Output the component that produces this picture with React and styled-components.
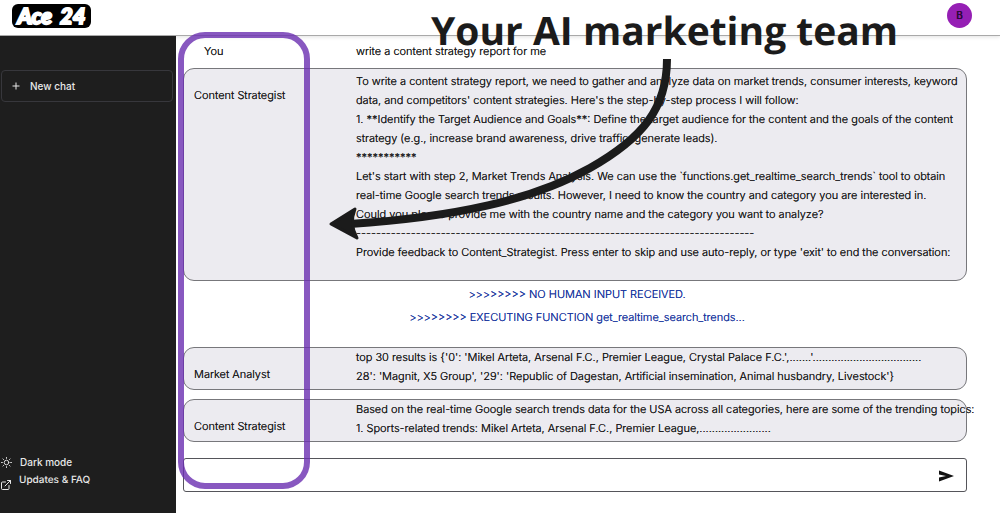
import React from "react";
import styled, { createGlobalStyle } from "styled-components";

const Global = createGlobalStyle`
  * { box-sizing: border-box; }
  body {
    margin: 0;
    background: #fff;
    color: #1c1c20;
    font: 300 11px/19px Inter, sans-serif;
    text-shadow: 0 0 0 currentColor;
    text-rendering: geometricPrecision;
  }
  button, input { font: inherit; color: inherit; text-shadow: inherit; }
`;

const Page = styled.div`
  position: relative;
  min-height: 100vh;
  display: flex;
  flex-direction: column;
`;

const Header = styled.header`
  display: flex;
  justify-content: space-between;
  align-items: center;
  height: 36px;
  padding: 0 28px 4px 12px;
  border-bottom: 1px solid #a9a9a9;
  box-shadow: 0 1px 4px rgba(0, 0, 0, 0.12);
`;

const Logo = styled.a`
  display: flex;
  justify-content: center;
  gap: 8px;
  width: 79px;
  height: 24px;
  border-radius: 6px;
  background: #000;
  color: #fff;
  text-decoration: none;
  white-space: nowrap;
  font: italic 900 22px/24px Lato, sans-serif;
  -webkit-text-stroke: 2px #fff;
`;

const Avatar = styled.button`
  width: 25px;
  height: 25px;
  padding: 0;
  border: 0;
  border-radius: 50%;
  background: #951fb4;
  color: #2c0838;
  font-size: 10px;
  font-weight: 500;
`;

const Body = styled.div`
  flex: 1;
  display: flex;
`;

const Sidebar = styled.aside`
  width: 176px;
  flex: none;
  display: flex;
  flex-direction: column;
  justify-content: space-between;
  padding: 34px 3px 23px 1px;
  background: #1e1e1e;
  color: #e8e8e8;
  font-size: 10px;
  font-weight: 500;
  text-shadow: none;
`;

const NewChat = styled.button`
  display: flex;
  align-items: center;
  gap: 10px;
  width: 100%;
  height: 32px;
  padding: 0 10px;
  border: 1px solid #37373c;
  border-radius: 4px;
  background: none;
`;

const SideLinks = styled.nav`
  display: flex;
  flex-direction: column;
`;

const SideButton = styled.button`
  display: flex;
  align-items: center;
  gap: 8px;
  height: 18px;
  padding: 0;
  border: 0;
  background: none;
`;

const SideLink = styled.a`
  display: flex;
  align-items: flex-start;
  gap: 8px;
  height: 19px;
  color: inherit;
  text-decoration: none;
  line-height: 18px;
  svg { margin-top: 9px; }
`;

const Main = styled.main`
  flex: 1;
  min-width: 0;
  padding: 5px 33px 21px 7px;
`;

const Message = styled.article`
  display: grid;
  grid-template-columns: 162px 1fr;
  padding-left: 10px;
  margin-bottom: ${(p) => p.$gap || 0}px;
  border: 1px solid ${(p) => (p.$plain ? "transparent" : "#77777b")};
  border-radius: 11px;
  background: ${(p) => (p.$plain ? "transparent" : "#ecebf0")};
`;

const Author = styled.h2`
  margin: 0;
  padding-top: ${(p) => p.$drop || 0}px;
  padding-left: ${(p) => p.$indent || 0}px;
  font: inherit;
`;

const Lines = styled.div`
  padding: ${(p) => p.$pad};
  white-space: nowrap;
  p { margin: 0; }
`;

const Status = styled.div`
  padding: 2px 0 18px 4px;
  color: #1c39a0;
  text-align: center;
  line-height: 23px;
  p { margin: 0; }
`;

const Composer = styled.form`
  display: flex;
  height: 34px;
  padding: 0 12px;
  border: 1px solid #55555a;
  border-radius: 3px;
`;

const Prompt = styled.input`
  flex: 1;
  min-width: 0;
  border: 0;
  outline: 0;
  background: none;
`;

const Send = styled.button`
  display: flex;
  align-items: center;
  padding: 2px 0 0;
  border: 0;
  background: none;
`;

const Highlight = styled.div`
  position: absolute;
  left: 178px;
  top: 32px;
  bottom: 24px;
  width: 132px;
  border: 6px solid rgba(106, 46, 176, 0.8);
  border-radius: 27px;
  pointer-events: none;
`;

const Caption = styled.h1`
  position: absolute;
  left: 431px;
  top: 4px;
  margin: 0;
  color: #1b1b1b;
  white-space: nowrap;
  font: 700 39px/54px "Open Sans", sans-serif;
  text-shadow: none;
  pointer-events: none;
`;

const Arrow = styled.svg`
  position: absolute;
  left: 320px;
  top: 50px;
  pointer-events: none;
`;

export default function App() {
  return (
    <>
      <Global />
      <Page>
        <Header>
          <Logo href="#">
            <span>Ace</span>
            <span>24</span>
          </Logo>
          <Avatar>B</Avatar>
        </Header>
        <Body>
          <Sidebar>
            <NewChat>
              <svg width="8" height="8" viewBox="0 0 8 8" stroke="currentColor" strokeWidth="1">
                <path d="M4 .5v7M.5 4h7" />
              </svg>
              New chat
            </NewChat>
            <SideLinks>
              <SideButton>
                <svg width="11" height="11" viewBox="0 0 24 24" fill="none" stroke="currentColor" strokeWidth="2" strokeLinecap="round">
                  <circle cx="12" cy="12" r="5" />
                  <path d="M12 1v2M12 21v2M4.2 4.2l1.4 1.4M18.4 18.4l1.4 1.4M1 12h2M21 12h2M4.2 19.8l1.4-1.4M18.4 5.6l1.4-1.4" />
                </svg>
                Dark mode
              </SideButton>
              <SideLink href="#">
                <svg width="10" height="10" viewBox="2 2 20 20" fill="none" stroke="currentColor" strokeWidth="2" strokeLinecap="round" strokeLinejoin="round">
                  <path d="M18 13v6a2 2 0 0 1-2 2H5a2 2 0 0 1-2-2V8a2 2 0 0 1 2-2h6M15 3h6v6M10 14 21 3" />
                </svg>
                Updates &amp; FAQ
              </SideLink>
            </SideLinks>
          </Sidebar>
          <Main>
            <Message $plain $gap={6}>
              <Author $indent={10}>You</Author>
              <Lines $pad="0">
                <p>write a content strategy report for me</p>
              </Lines>
            </Message>
            <Message>
              <Author $drop={17}>Content Strategist</Author>
              <Lines $pad="3px 0 18px">
                <p>To write a content strategy report, we need to gather and analyze data on market trends, consumer interests, keyword</p>
                <p>data, and competitors' content strategies. Here's the step-by-step process I will follow:</p>
                <p>1. **Identify the Target Audience and Goals**: Define the target audience for the content and the goals of the content</p>
                <p>strategy (e.g., increase brand awareness, drive traffic, generate leads).</p>
                <p>***********</p>
                <p>Let's start with step 2, Market Trends Analysis. We can use the `functions.get_realtime_search_trends` tool to obtain</p>
                <p>real-time Google search trends results. However, I need to know the country and category you are interested in.</p>
                <p>Could you please provide me with the country name and the category you want to analyze?</p>
                <p>--------------------------------------------------------------------------------</p>
                <p>Provide feedback to Content_Strategist. Press enter to skip and use auto-reply, or type 'exit' to end the conversation:</p>
              </Lines>
            </Message>
            <Status>
              <p>&gt;&gt;&gt;&gt;&gt;&gt;&gt;&gt; NO HUMAN INPUT RECEIVED.</p>
              <p>&gt;&gt;&gt;&gt;&gt;&gt;&gt;&gt; EXECUTING FUNCTION get_realtime_search_trends...</p>
            </Status>
            <Message $gap={9}>
              <Author $drop={17}>Market Analyst</Author>
              <Lines $pad="0 0 3px">
                <p>top 30 results is {"{"}'0': 'Mikel Arteta, Arsenal F.C., Premier League, Crystal Palace F.C.',.......'...................................</p>
                <p>28': 'Magnit, X5 Group', '29': 'Republic of Dagestan, Artificial insemination, Animal husbandry, Livestock'{"}"}</p>
              </Lines>
            </Message>
            <Message $gap={16}>
              <Author $drop={17}>Content Strategist</Author>
              <Lines $pad="0 0 3px">
                <p>Based on the real-time Google search trends data for the USA across all categories, here are some of the trending topics:</p>
                <p>1. Sports-related trends: Mikel Arteta, Arsenal F.C., Premier League,.......................</p>
              </Lines>
            </Message>
            <Composer>
              <Prompt aria-label="Message" />
              <Send type="button" aria-label="Send">
                <svg width="15" height="12" viewBox="0 0 15 12" fill="#111">
                  <path d="M0 .5 15 6 0 11.5V7.500L7 6 0 4.500Z" />
                </svg>
              </Send>
            </Composer>
          </Main>
        </Body>
        <Highlight />
        <Caption>Your AI marketing team</Caption>
        <Arrow width="360" height="200" viewBox="320 50 360 200">
          <path d="M667 59C667 108 643 138 590 168C533 200 455 217 350 224" fill="none" stroke="#1b1b1b" strokeWidth="8" />
          <path d="M331 224 355 209Q349 224 357 238Z" fill="#1b1b1b" stroke="#1b1b1b" strokeWidth="3" strokeLinejoin="round" />
        </Arrow>
      </Page>
    </>
  );
}
